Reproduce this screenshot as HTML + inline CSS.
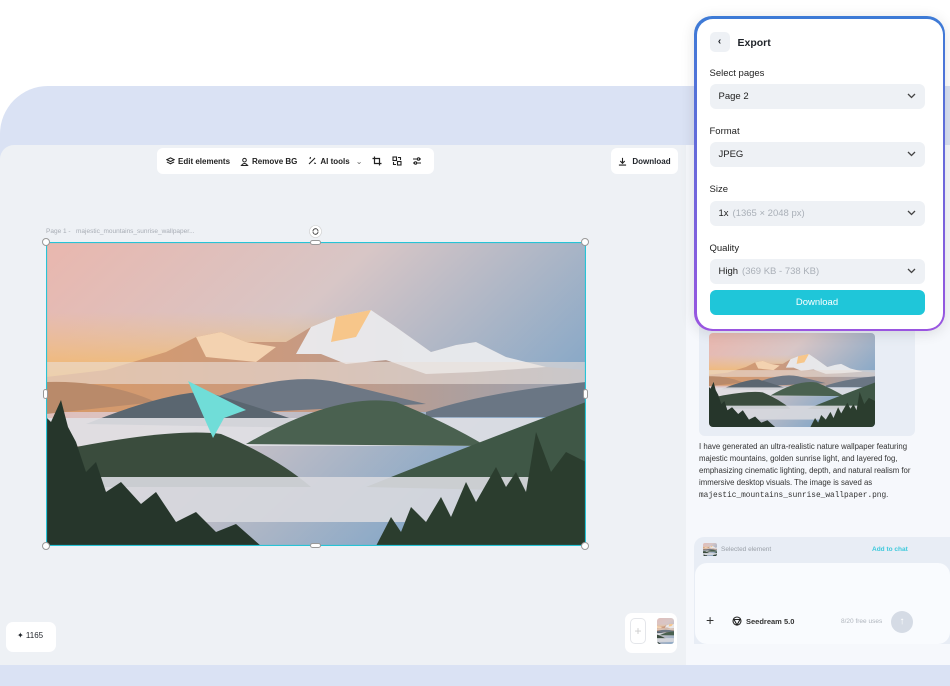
<!DOCTYPE html>
<html><head><meta charset="utf-8"><style>
*{box-sizing:border-box;margin:0;padding:0}
body{width:950px;height:644px;overflow:hidden;background:#fff;font-family:"Liberation Sans",sans-serif;position:relative;color:#1f2329}
.abs{position:absolute}
.bluebg{left:0;top:86px;width:950px;height:600px;background:#dae2f4;border-radius:48px 0 0 0}
.canvas{left:0;top:145px;width:690px;height:520px;background:#eef1f5;border-radius:14px 0 0 0}
.chat{left:686px;top:145px;width:264px;height:520px;background:#f6f8fc}
.tb{left:157px;top:148px;width:277px;height:26px;background:#fff;border-radius:6px;font-size:8px;font-weight:bold;display:flex;align-items:center;padding-left:9px;gap:10px;color:#222}
.tb span{display:flex;align-items:center;gap:3px}
.dl{left:611px;top:148px;width:67px;height:26px;background:#fff;border-radius:6px;font-size:8px;font-weight:bold;display:flex;align-items:center;justify-content:center;gap:5px}
.panel{left:694px;top:16px;width:251px;height:315px;border-radius:18px;background:linear-gradient(#3d7bd6,#9a55e0);padding:2.5px;box-shadow:0 2px 14px rgba(0,0,0,.12)}
.pin{width:100%;height:100%;background:#fff;border-radius:16px;position:relative}
.lbl{position:absolute;left:13px;font-size:9.5px;color:#222}
.sel{position:absolute;left:13px;width:215px;height:25px;background:#eef1f5;border-radius:6px;font-size:9.5px;display:flex;align-items:center;padding-left:9px;color:#222}
.sel i{font-style:normal;color:#aab0b8;margin-left:4px}
.sel svg{position:absolute;right:9px;top:9px}
.btn{position:absolute;left:13px;top:271px;width:215px;height:25px;background:#1fc6d9;border-radius:6px;color:#fff;font-size:9.5px;display:flex;align-items:center;justify-content:center}
.msg{left:699px;top:441px;width:222px;font-size:7.8px;line-height:12px;color:#333}
.msg code{font-family:"Liberation Mono",monospace;font-size:7.8px}
</style></head><body>
<svg width="0" height="0" style="position:absolute"><defs>
<linearGradient id="sky" x1="0" y1="0" x2="1" y2="0.6"><stop offset="0" stop-color="#e9b7ae"/><stop offset=".45" stop-color="#d8c6c6"/><stop offset="1" stop-color="#7aa3c7"/></linearGradient>
<linearGradient id="hz" x1="0" y1="0" x2="0" y2="1"><stop offset="0" stop-color="#f8c070" stop-opacity="0"/><stop offset="1" stop-color="#f5b55a" stop-opacity=".9"/></linearGradient>
<linearGradient id="rng" x1="0" y1="0" x2="1" y2="0"><stop offset="0" stop-color="#d99a66"/><stop offset=".45" stop-color="#c99a80"/><stop offset="1" stop-color="#9aa3b3"/></linearGradient>
<symbol id="land" viewBox="0 0 540 304" preserveAspectRatio="none">
<rect width="540" height="304" fill="url(#sky)"/>
<rect y="70" width="330" height="70" fill="url(#hz)"/>
<path d="M0 135 L60 128 L120 110 L150 95 L175 90 L200 100 L240 100 L265 85 L290 75 L325 68 L350 85 L385 110 L410 103 L430 100 L460 115 L500 125 L540 128 V170 H0Z" fill="url(#rng)"/>
<path d="M265 85 L290 75 L325 68 L350 85 L385 110 L410 103 L430 100 L460 115 L500 125 L430 130 L380 132 L340 118 L300 122 L275 112 L250 112Z" fill="#eceff4" opacity=".9"/>
<path d="M150 95 L175 90 L200 100 L230 105 L210 120 L160 115Z" fill="#f3d2b0"/>
<path d="M290 75 L325 68 L310 95 L285 100Z" fill="#f7c68a"/>
<rect y="120" width="540" height="22" fill="#eadfd9" opacity=".6"/>
<path d="M0 140 Q60 138 110 160 L0 172Z" fill="#b98a6a"/>
<path d="M170 155 Q240 130 290 140 Q330 150 380 162 L170 172Z" fill="#6d7784"/>
<path d="M40 182 Q120 150 160 150 Q230 170 270 186Z" fill="#5a6670"/>
<path d="M380 170 Q440 150 540 140 V175 H380Z" fill="#6a7684"/>
<rect y="176" width="540" height="28" fill="#e0e0e4" opacity=".9"/>
<path d="M200 202 Q290 150 350 160 Q400 180 440 204Z" fill="#4a6150"/>
<path d="M320 245 Q420 205 540 160 V250Z" fill="#3f5746"/>
<path d="M30 205 Q130 186 175 192 Q230 215 265 245 L30 245Z" fill="#3a4c3d"/>
<rect y="235" width="540" height="45" fill="#d7d8dd" opacity=".92"/>
<path d="M0 304 V175 L5 180 L15 158 L22 185 L30 200 L40 230 L50 220 L60 250 L75 240 L95 262 L110 250 L130 280 L150 270 L170 290 L190 282 L215 304Z" fill="#26362b"/>
<path d="M330 304 L345 275 L355 290 L365 265 L380 280 L395 255 L405 275 L420 240 L430 260 L450 225 L460 245 L470 230 L480 250 L490 190 L505 230 L520 210 L540 220 V304Z" fill="#2b3d2e"/>
</symbol></defs></svg>

<div class="abs bluebg"></div>
<div class="abs canvas"></div>
<div class="abs chat"></div>

<div class="abs tb">
<span><svg width="9" height="9" viewBox="0 0 10 10" fill="none" stroke="#222" stroke-width="1.2"><path d="M5 1 L9 3 L5 5 L1 3Z M1 5.5 L5 7.5 L9 5.5"/></svg>Edit elements</span>
<span><svg width="9" height="9" viewBox="0 0 10 10" fill="none" stroke="#222" stroke-width="1.1"><circle cx="5" cy="3.5" r="2"/><path d="M1.5 9.5 Q5 5 8.5 9.5Z"/></svg>Remove BG</span>
<span><svg width="10" height="10" viewBox="0 0 10 10" fill="none" stroke="#222" stroke-width="1.1"><path d="M2 8 L8 2 M3 3 L3.5 1 M7 7 L9 7.5"/></svg>AI tools <span style="font-weight:normal;color:#666;margin-left:3px">⌄</span></span>
<span><svg width="10" height="10" viewBox="0 0 10 10" fill="none" stroke="#222" stroke-width="1.2"><path d="M2.5 0.5 V7.5 H9.5 M0.5 2.5 H7.5 V9.5"/></svg></span>
<span><svg width="10" height="10" viewBox="0 0 10 10" fill="none" stroke="#222" stroke-width="1.1"><rect x="1" y="1" width="3.5" height="3.5"/><rect x="5.5" y="5.5" width="3.5" height="3.5"/><path d="M6 1.5 H8.5 V4 M1.5 6 V8.5 H4"/></svg></span>
<span><svg width="10" height="10" viewBox="0 0 10 10" fill="none" stroke="#222" stroke-width="1.1"><path d="M1 3 H9 M1 7 H9"/><circle cx="6.5" cy="3" r="1.2" fill="#fff"/><circle cx="3.5" cy="7" r="1.2" fill="#fff"/></svg></span>
</div>
<div class="abs dl"><svg width="9" height="9" viewBox="0 0 10 10" fill="none" stroke="#222" stroke-width="1.2"><path d="M5 1 V7 M2.5 4.5 L5 7 L7.5 4.5 M1 9 H9"/></svg>Download</div>

<div class="abs" style="left:46px;top:228px;font-size:6.5px;color:#a8adb5">Page 1 -&nbsp;&nbsp; majestic_mountains_sunrise_wallpaper...</div>
<svg class="abs" style="left:309px;top:225px" width="13" height="13" viewBox="0 0 13 13"><circle cx="6.5" cy="6.5" r="6" fill="#fff" stroke="#ccc" stroke-width=".6"/><path d="M4 6.5 A2.5 2.5 0 0 1 9 6 M9 6.5 A2.5 2.5 0 0 1 4 7" fill="none" stroke="#333" stroke-width=".9"/></svg>
<svg class="abs" style="left:46px;top:242px" width="540" height="304"><use href="#land" width="540" height="304"/>
<path d="M142 139 L200 168 L178 176 L167 196Z" fill="#70ddd8"/>
<rect x=".5" y=".5" width="539" height="303" fill="none" stroke="#27c4d6" stroke-width="1.2"/></svg>
<div class="abs" style="left:42px;top:238px;width:8px;height:8px;border-radius:50%;background:#fff;border:1px solid #999"></div>
<div class="abs" style="left:581px;top:238px;width:8px;height:8px;border-radius:50%;background:#fff;border:1px solid #999"></div>
<div class="abs" style="left:42px;top:542px;width:8px;height:8px;border-radius:50%;background:#fff;border:1px solid #999"></div>
<div class="abs" style="left:581px;top:542px;width:8px;height:8px;border-radius:50%;background:#fff;border:1px solid #999"></div>
<div class="abs" style="left:310px;top:240px;width:11px;height:5px;border-radius:3px;background:#fff;border:1px solid #999"></div>
<div class="abs" style="left:310px;top:543px;width:11px;height:5px;border-radius:3px;background:#fff;border:1px solid #999"></div>
<div class="abs" style="left:43px;top:389px;width:5px;height:10px;border-radius:3px;background:#fff;border:1px solid #999"></div>
<div class="abs" style="left:583px;top:389px;width:5px;height:10px;border-radius:3px;background:#fff;border:1px solid #999"></div>

<div class="abs" style="left:6px;top:622px;width:50px;height:30px;background:#fff;border-radius:7px;font-size:8px;padding:9px 0 0 11px">✦ 1165</div>
<div class="abs" style="left:625px;top:613px;width:52px;height:40px;background:#fff;border-radius:7px"></div>
<div class="abs" style="left:630px;top:618px;width:16px;height:26px;border:1px solid #e4e6ea;border-radius:5px;color:#ccc;font-size:12px;text-align:center;line-height:24px">+</div>
<svg class="abs" style="left:657px;top:618px;border-radius:3px" width="17" height="26"><use href="#land" x="-20" width="60" height="26"/></svg>

<div class="abs" style="left:699px;top:320px;width:216px;height:116px;background:#e8edf5;border-radius:6px"></div>
<svg class="abs" style="left:709px;top:333px;border-radius:4px" width="166" height="94"><use href="#land" width="166" height="94"/></svg>
<div class="abs msg">I have generated an ultra-realistic nature wallpaper featuring majestic mountains, golden sunrise light, and layered fog, emphasizing cinematic lighting, depth, and natural realism for immersive desktop visuals. The image is saved as <code>majestic_mountains_sunrise_wallpaper.png</code>.</div>
<div class="abs" style="left:694px;top:537px;width:256px;height:107px;background:#e8edf5;border-radius:10px 0 0 0"></div>
<svg class="abs" style="left:703px;top:543px;border-radius:2px" width="14" height="13"><use href="#land" x="-6" width="26" height="13"/></svg>
<div class="abs" style="left:721px;top:546px;font-size:6.5px;color:#9aa0a8">Selected element</div>
<div class="abs" style="left:872px;top:546px;font-size:6.5px;color:#3cc9dc;font-weight:bold">Add to chat</div>
<div class="abs" style="left:695px;top:563px;width:255px;height:81px;background:#f9fbfe;border-radius:12px"></div>
<div class="abs" style="left:706px;top:612px;font-size:14px;color:#333">+</div>
<svg class="abs" style="left:732px;top:616px" width="10" height="10" viewBox="0 0 10 10" fill="none" stroke="#222" stroke-width="1.1"><circle cx="5" cy="5" r="4"/><path d="M2 3.5 H8 L5 9Z"/></svg>
<div class="abs" style="left:746px;top:617px;font-size:7.5px;font-weight:bold;color:#333">Seedream 5.0</div>
<div class="abs" style="left:841px;top:618px;font-size:6.5px;color:#b0b5bd">8/20 free uses</div>
<div class="abs" style="left:891px;top:611px;width:22px;height:22px;border-radius:50%;background:#d5dbe5;color:#fff;font-size:10px;text-align:center;line-height:22px">↑</div>

<div class="abs panel"><div class="pin">
<div style="position:absolute;left:13px;top:13px;width:20px;height:20px;background:#eef1f5;border-radius:5px;text-align:center;line-height:19px;font-size:10px;font-weight:bold">‹</div>
<div style="position:absolute;left:41px;top:18px;font-size:10.5px;font-weight:bold">Export</div>
<div class="lbl" style="top:49px">Select pages</div>
<div class="sel" style="top:65px">Page 2<svg width="9" height="6" viewBox="0 0 9 6"><path d="M1 1 L4.5 4.5 L8 1" fill="none" stroke="#444" stroke-width="1.3"/></svg></div>
<div class="lbl" style="top:107px">Format</div>
<div class="sel" style="top:123px">JPEG<svg width="9" height="6" viewBox="0 0 9 6"><path d="M1 1 L4.5 4.5 L8 1" fill="none" stroke="#444" stroke-width="1.3"/></svg></div>
<div class="lbl" style="top:165px">Size</div>
<div class="sel" style="top:182px">1x<i>(1365 × 2048 px)</i><svg width="9" height="6" viewBox="0 0 9 6"><path d="M1 1 L4.5 4.5 L8 1" fill="none" stroke="#444" stroke-width="1.3"/></svg></div>
<div class="lbl" style="top:224px">Quality</div>
<div class="sel" style="top:240px">High<i>(369 KB - 738 KB)</i><svg width="9" height="6" viewBox="0 0 9 6"><path d="M1 1 L4.5 4.5 L8 1" fill="none" stroke="#444" stroke-width="1.3"/></svg></div>
<div class="btn">Download</div>
</div></div>
</body></html>
